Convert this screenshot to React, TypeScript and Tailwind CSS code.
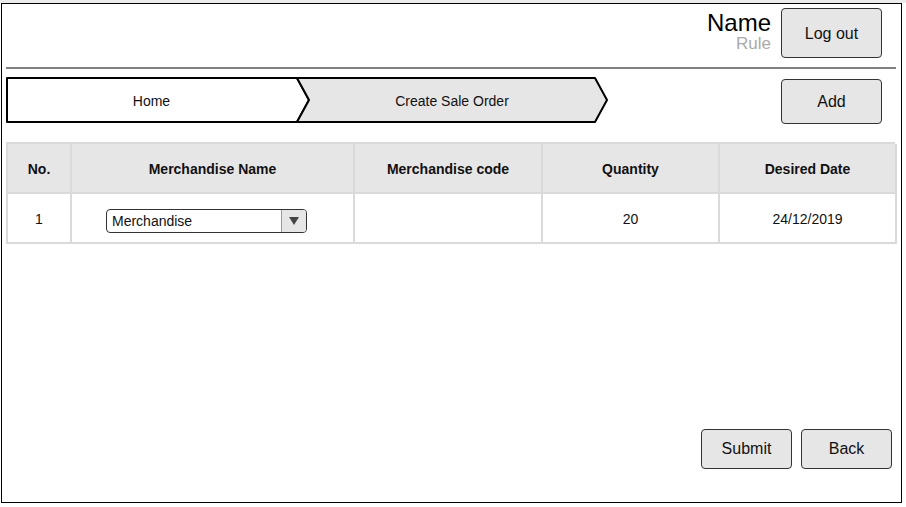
const font = { fontFamily: '"Liberation Sans", Arial, sans-serif' };

const columns = ['No.', 'Merchandise Name', 'Merchandise code', 'Quantity', 'Desired Date'];

function Breadcrumb() {
  return (
    <div className="relative w-[603px] h-[46px]">
      <svg className="absolute inset-0" width="603" height="46" viewBox="0 0 603 46">
        <polygon points="1,1 291,1 303,23 291,45 1,45" fill="#ffffff" stroke="#000" strokeWidth="2" strokeLinejoin="round" />
        <polygon points="291,1 589,1 601,23 589,45 291,45 303,23" fill="#e6e6e6" stroke="#000" strokeWidth="2" strokeLinejoin="round" />
      </svg>
      <div className="relative flex h-full items-center pt-[3px] text-[14px] text-[#111]">
        <span className="w-[291px] text-center">Home</span>
        <span className="w-[310px] text-center">Create Sale Order</span>
      </div>
    </div>
  );
}

function Button({ label, className }: { label: string; className: string }) {
  return (
    <button
      type="button"
      className={`flex items-center justify-center rounded-[4px] border border-[#333] bg-[#e6e6e6] text-[16px] text-[#111] ${className}`}
    >
      {label}
    </button>
  );
}

function MerchandiseSelect() {
  return (
    <div className="flex h-[24px] w-[201px] overflow-hidden rounded-[4px] border border-[#333] bg-white">
      <span className="flex-1 pl-[5px] text-[14px] leading-[22px] text-[#111]">Merchandise</span>
      <span className="flex w-[25px] items-center justify-center border-l border-[#999] bg-[#e6e6e6]">
        <svg width="10" height="8" viewBox="0 0 10 8">
          <polygon points="0,0 10,0 5,8" fill="#444" />
        </svg>
      </span>
    </div>
  );
}

export default function App() {
  return (
    <div className="w-[906px] h-[507px] bg-white" style={font}>
      <div className="h-[3px] bg-[#ebebeb]" />
      <div className="ml-[1px] flex h-[500px] w-[901px] flex-col border border-black pl-[4px] pr-[5px]">
        <div className="flex justify-end pt-[4px]">
          <div className="mr-[10px] mt-[3px] flex flex-col items-end leading-none">
            <span className="text-[24px] text-black">Name</span>
            <span className="mt-[0px] text-[17px] text-[#aaaaaa]">Rule</span>
          </div>
          <Button label="Log out" className="mr-[14px] h-[50px] w-[101px] pt-[1px]" />
        </div>
        <div className="mt-[9px] h-[2px] bg-[#808080]" />

        <div className="mt-[8px] flex items-start justify-between">
          <Breadcrumb />
          <Button label="Add" className="mr-[14px] mt-[2px] h-[45px] w-[101px]" />
        </div>

        <div className="mt-[18px] mr-[1px] grid grid-cols-[64px_283px_188px_177px_177px] border-l-2 border-t-2 border-[#dadada] text-[14px] text-[#111]">
          {columns.map((c) => (
            <div key={c} className="flex h-[50px] items-center justify-center border-b-2 border-r-2 border-[#dadada] bg-[#e6e6e6] pt-[3px] font-bold">
              {c}
            </div>
          ))}
          <div className="flex h-[50px] items-center justify-center border-b-2 border-r-2 border-[#dadada] pt-[2px]">1</div>
          <div className="flex h-[50px] items-center border-b-2 border-r-2 border-[#dadada] pl-[34px] pt-[5px]">
            <MerchandiseSelect />
          </div>
          <div className="h-[50px] border-b-2 border-r-2 border-[#dadada]" />
          <div className="flex h-[50px] items-center justify-center border-b-2 border-r-2 border-[#dadada] pt-[2px]">20</div>
          <div className="flex h-[50px] items-center justify-center border-b-2 border-r-2 border-[#dadada] pt-[2px]">24/12/2019</div>
        </div>

        <div className="mt-auto mb-[33px] mr-[4px] flex justify-end gap-[9px]">
          <Button label="Submit" className="h-[40px] w-[91px]" />
          <Button label="Back" className="h-[40px] w-[91px]" />
        </div>
      </div>
    </div>
  );
}
